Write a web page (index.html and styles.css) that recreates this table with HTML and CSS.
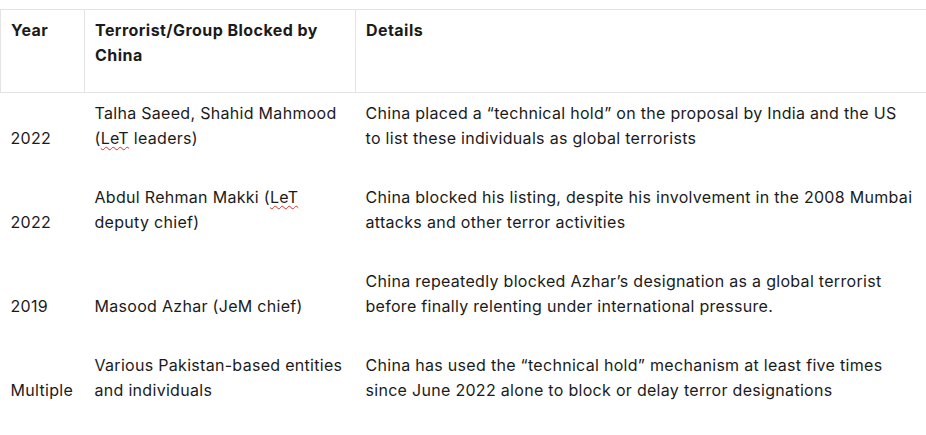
FILE: index.html
```html
<!DOCTYPE html>
<html lang="en">
<head>
<meta charset="utf-8">
<title>China blocks</title>
<link rel="stylesheet" href="styles.css">
</head>
<body>
<table class="tbl">
  <colgroup>
    <col class="c-year">
    <col class="c-group">
    <col class="c-det">
  </colgroup>
  <thead>
    <tr>
      <th>Year</th>
      <th>Terrorist/Group Blocked by China</th>
      <th>Details</th>
    </tr>
  </thead>
  <tbody>
    <tr>
      <td>2022</td>
      <td>Talha Saeed, Shahid Mahmood (<span class="spell">LeT</span> leaders)</td>
      <td>China placed a “technical hold” on the proposal by India and the US to list these individuals as global terrorists</td>
    </tr>
    <tr>
      <td>2022</td>
      <td>Abdul Rehman Makki (<span class="spell">LeT</span> deputy chief)</td>
      <td>China blocked his listing, despite his involvement in the 2008 Mumbai attacks and other terror activities</td>
    </tr>
    <tr>
      <td>2019</td>
      <td>Masood Azhar (JeM chief)</td>
      <td>China repeatedly blocked Azhar’s designation as a global terrorist before finally relenting under international pressure.</td>
    </tr>
    <tr>
      <td>Multiple</td>
      <td>Various Pakistan-based entities and individuals</td>
      <td>China has used the “technical hold” mechanism at least five times since June 2022 alone to block or delay terror designations</td>
    </tr>
  </tbody>
</table>
</body>
</html>
```
FILE: styles.css
```css
html, body {
  margin: 0;
  padding: 0;
  background: #ffffff;
}
body {
  font-family: Inter, "Liberation Sans", sans-serif;
  font-size: 16px;
  line-height: 25px;
  letter-spacing: 0.3px;
  color: #1b1b1b;
}
.tbl {
  margin-top: 9px;
  width: 926px;
  border-collapse: collapse;
  table-layout: fixed;
}
.c-year { width: 84px; }
.c-group { width: 271px; }
.c-det { width: 571px; }
.tbl th {
  border: 1px solid #e3e3e3;
  text-align: left;
  vertical-align: top;
  font-weight: 700;
  letter-spacing: 0.45px;
  padding: 8px 10px 24px;
}
.tbl td {
  vertical-align: bottom;
  padding: 8px 10px 26px;
}
.spell {
  text-decoration: underline wavy #d93025;
  text-decoration-thickness: 1px;
  text-underline-offset: 2px;
}
```
